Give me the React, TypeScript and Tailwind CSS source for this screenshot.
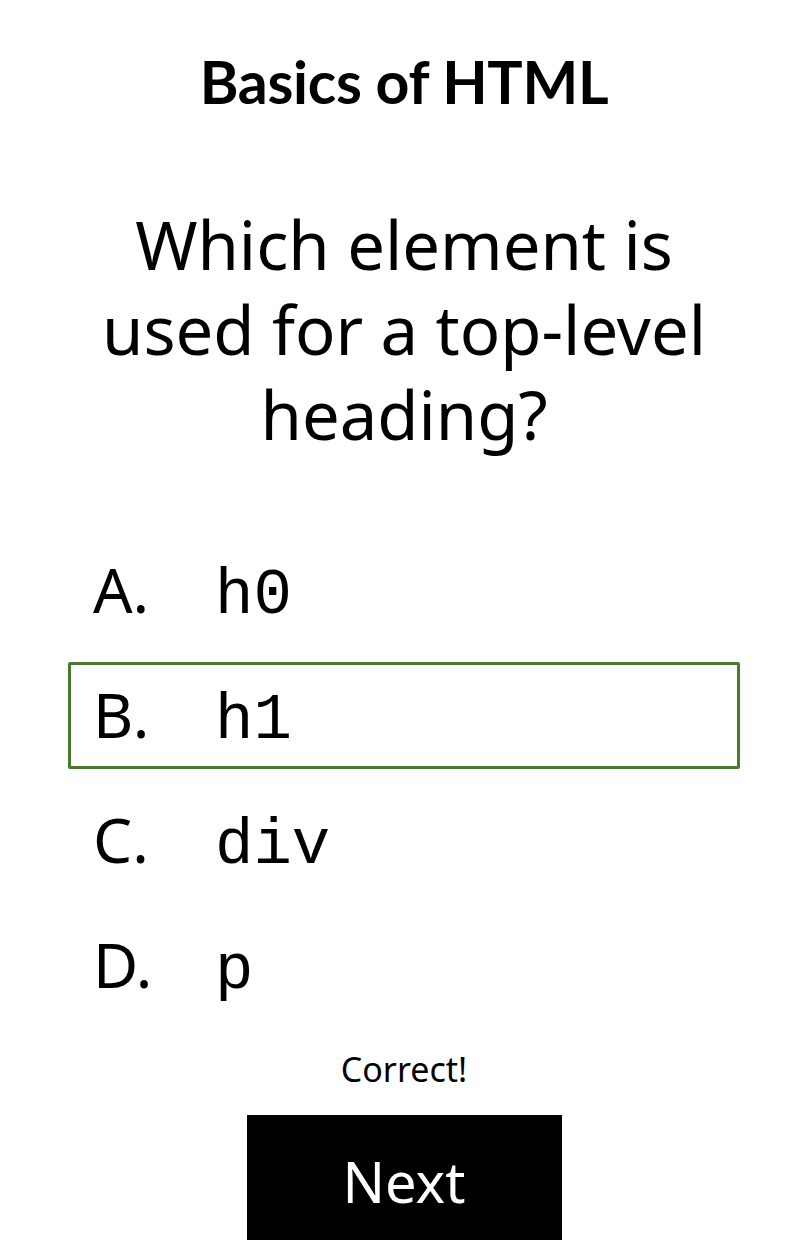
const options = [
  { label: 'A.', code: 'h0' },
  { label: 'B.', code: 'h1' },
  { label: 'C.', code: 'div' },
  { label: 'D.', code: 'p' },
]

const selected = 1

export default function App() {
  return (
    <div className="min-h-[1240px] bg-white text-black font-['Lato','Noto_Sans',sans-serif] flex flex-col items-center">
      <h1 className="mt-[48px] text-[59px] font-bold leading-[68px] tracking-[-0.3px]">Basics of HTML</h1>

      <p className="mt-[86px] w-[660px] text-center text-[67px] leading-[85px] font-['Noto_Sans',sans-serif] font-normal">
        Which element is used for a top-level heading?
      </p>

      <ul className="mt-[80px] w-[672px] flex flex-col gap-[18px]">
        {options.map((opt, i) => (
          <li
            key={opt.label}
            className={`h-[107px] flex items-baseline pt-[9px] pl-[22px] border-[3px] rounded-[2px] ${i === selected ? 'border-[#4a7a2f]' : 'border-transparent'}`}
          >
            <span className="w-[122px] text-[62px] leading-[80px] font-['Noto_Sans',sans-serif]">{opt.label}</span>
            <span className="text-[64px] leading-[80px] font-['Liberation_Mono',monospace]">{opt.code}</span>
          </li>
        ))}
      </ul>

      <p className="mt-[27px] text-[34px] leading-[46px] font-['Noto_Sans',sans-serif]">Correct!</p>

      <button className="mt-[23px] w-[315px] h-[140px] bg-black text-white text-[56px] font-['Noto_Sans',sans-serif] flex items-start justify-center pt-[24px]">
        Next
      </button>
    </div>
  )
}
